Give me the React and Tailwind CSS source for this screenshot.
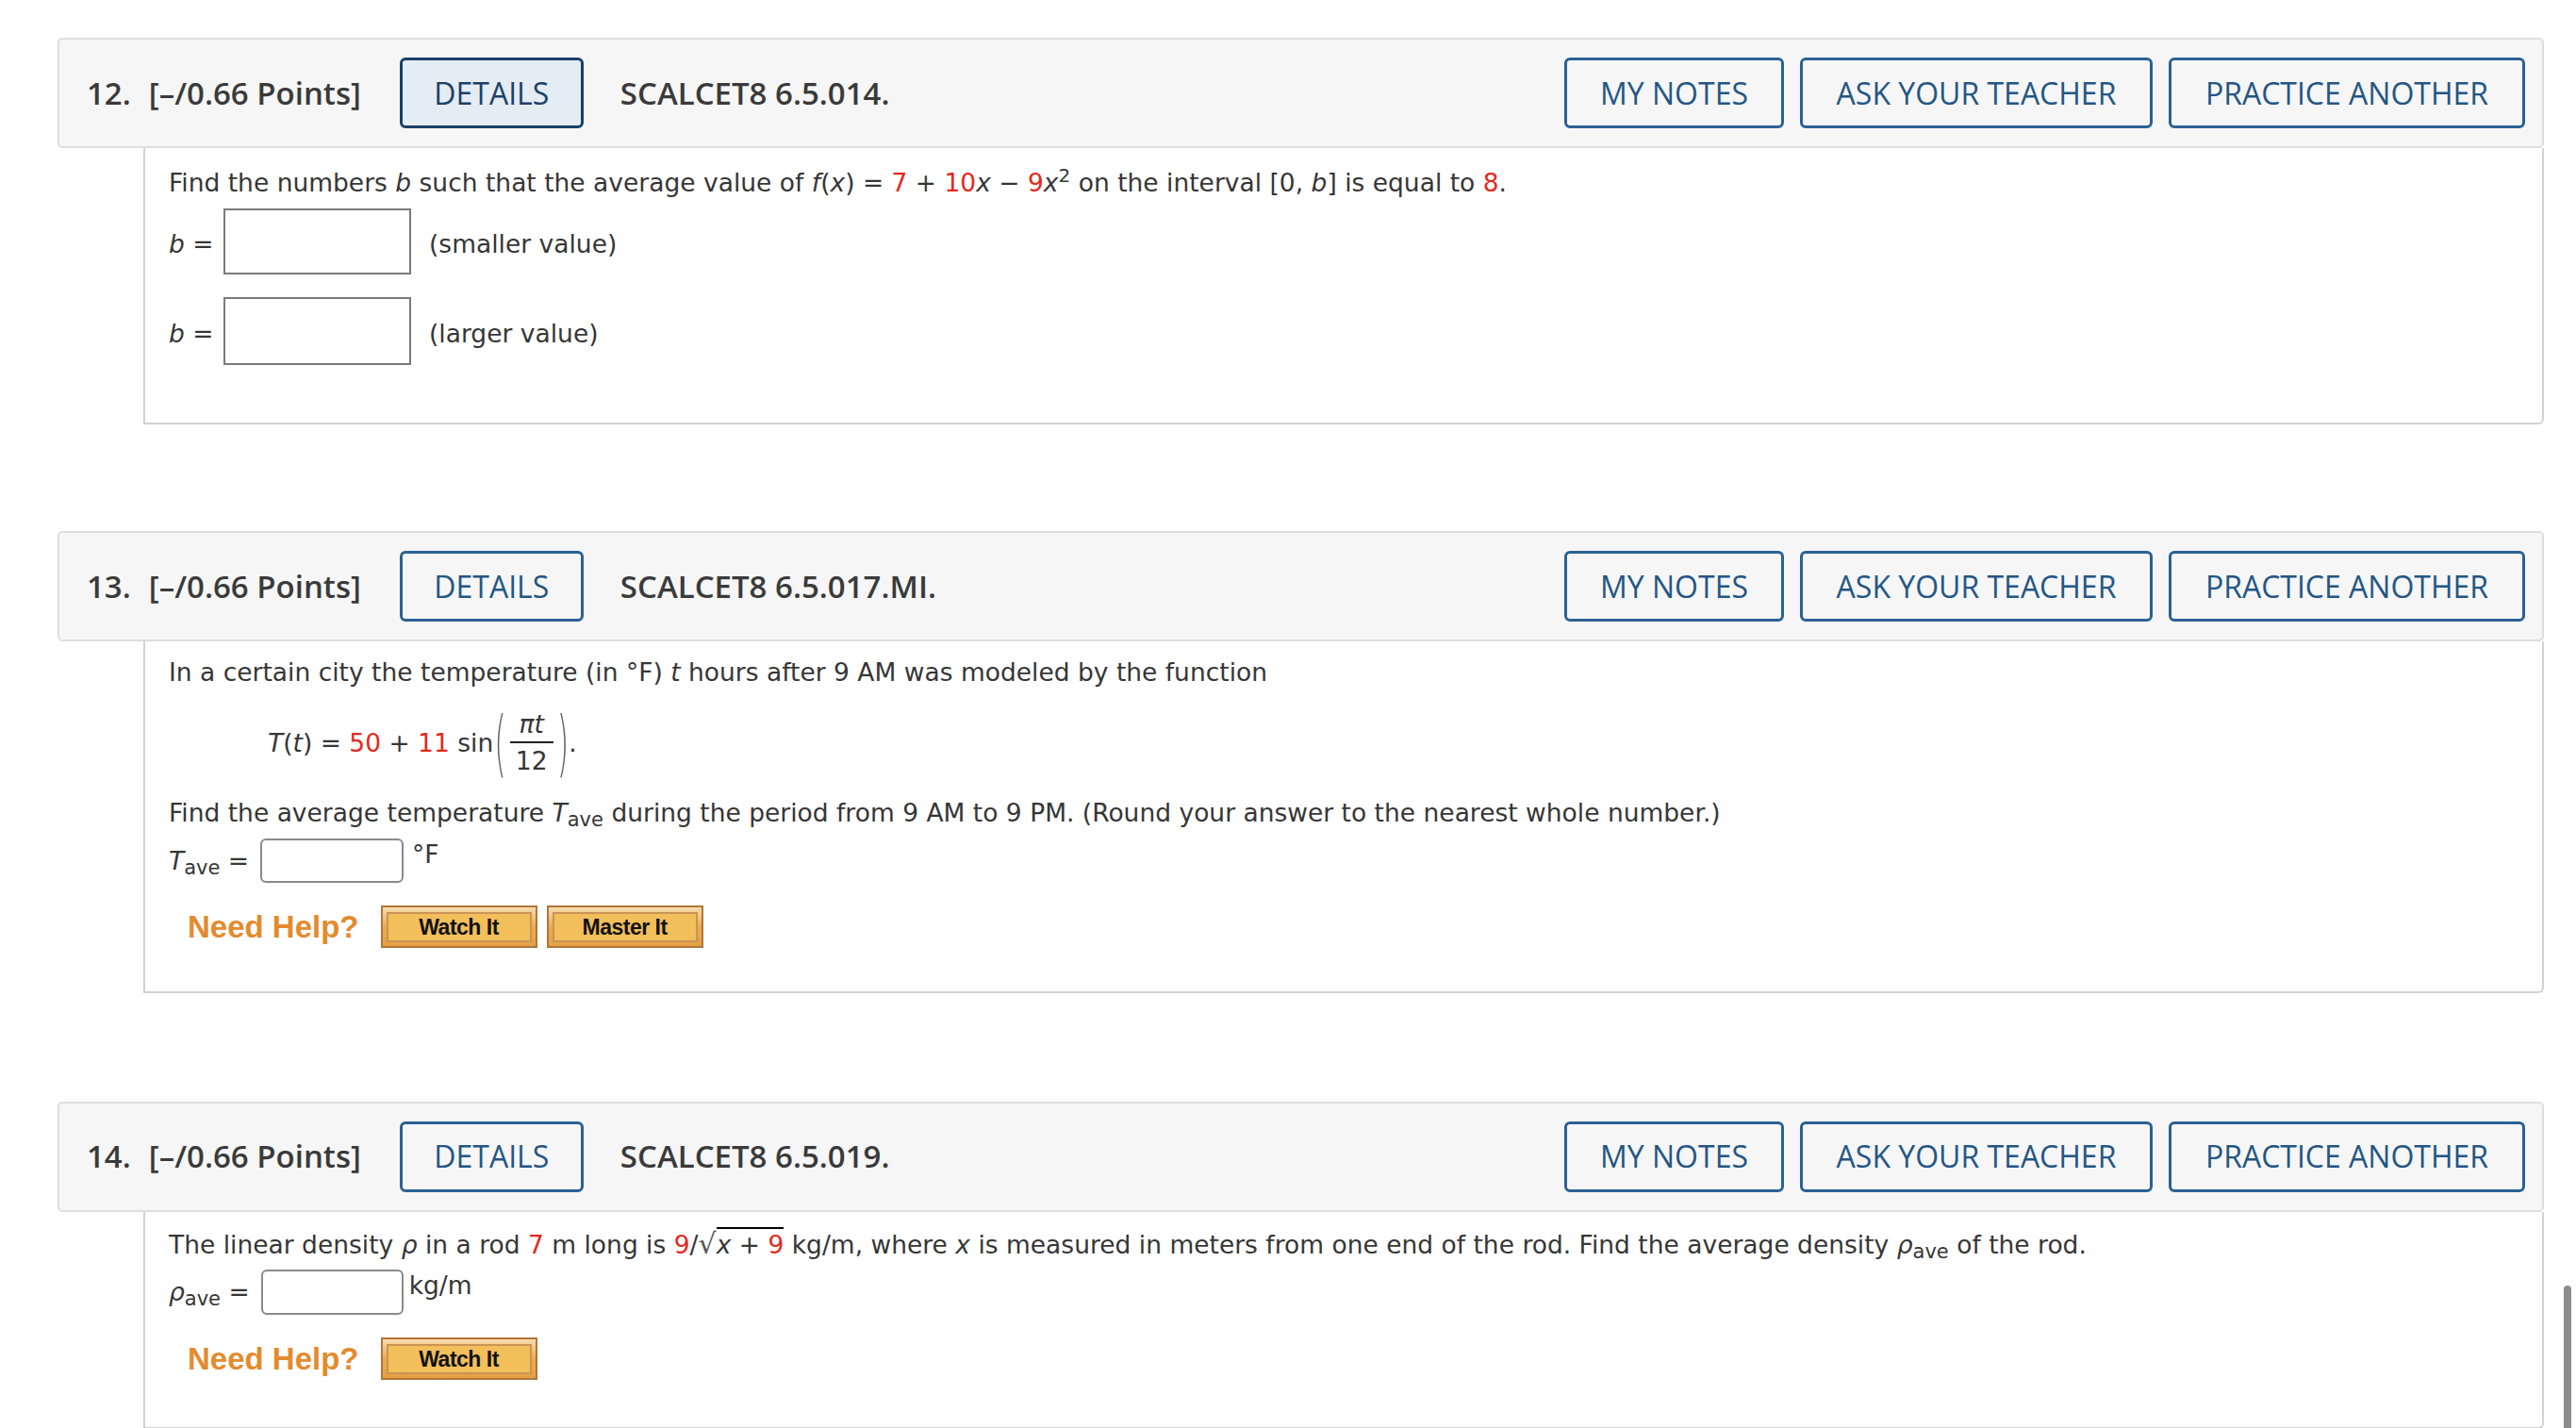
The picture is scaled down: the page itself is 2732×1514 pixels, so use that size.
import React from "react";

const Red = ({ children }) => <span className="text-[#e5281d]">{children}</span>;
const I = ({ children }) => <span className="italic">{children}</span>;

const Header = ({ num, code, active }) => {
  return (
    <div className="flex h-[117px] items-center rounded-[5px] border-2 border-[#dedede] bg-[#f6f6f6] pl-[29px] pr-[18px] font-['Open_Sans',sans-serif] text-[#3a3a3a]">
      <span className="text-[33px] font-semibold">{num}.</span>
      <span className="ml-[19px] text-[33px] font-semibold">[–/0.66 Points]</span>
      <button
        className={
          active
            ? "ml-[41px] h-[75px] w-[195px] rounded-[6px] border-[3px] border-[#1a4068] bg-[#e4ecf4] text-[32px] font-medium text-[#1c4168]"
            : "ml-[41px] h-[75px] w-[195px] rounded-[6px] border-[3px] border-[#2b6194] bg-transparent text-[32px] font-medium text-[#245685]"
        }
      >
        DETAILS
      </button>
      <span className="ml-[39px] text-[33px] font-semibold">{code}</span>
      <div className="ml-auto flex gap-[17px]">
        <button className="h-[75px] w-[233px] rounded-[6px] border-[3px] border-[#2b6194] text-[32px] font-medium text-[#245685]">
          MY NOTES
        </button>
        <button className="h-[75px] w-[374px] rounded-[6px] border-[3px] border-[#2b6194] text-[32px] font-medium text-[#245685]">
          ASK YOUR TEACHER
        </button>
        <button className="h-[75px] w-[378px] rounded-[6px] border-[3px] border-[#2b6194] text-[32px] font-medium text-[#245685]">
          PRACTICE ANOTHER
        </button>
      </div>
    </div>
  );
};

const HelpButton = ({ label }) => (
  <button className="h-[45px] w-[166px] border-2 border-[#b0773a] bg-gradient-to-b from-[#f6dcae] via-[#eeab4c] to-[#e6a041] px-[4px] pt-[5px] pb-[4px]">
    <span className="flex h-full items-center justify-center border-2 border-[#c99456] bg-[#f3bf5b] font-['Liberation_Sans',Arial,sans-serif] text-[23px] font-bold tracking-[-0.5px] text-[#111]">
      {label}
    </span>
  </button>
);

const NeedHelp = ({ buttons }) => (
  <div className="flex items-center pl-[20px]">
    <span className="font-['Liberation_Sans',Arial,sans-serif] text-[33px] font-bold text-[#e38b2e]">
      Need Help?
    </span>
    <div className="ml-[23px] flex gap-[10px]">
      {buttons.map((b) => (
        <HelpButton key={b} label={b} />
      ))}
    </div>
  </div>
);

const Body = ({ children, className }) => (
  <div
    className={`ml-[91px] rounded-br-[6px] border-x-2 border-b-2 border-[#d2d2d2] bg-white pl-[25px] font-['DejaVu_Sans',Verdana,sans-serif] text-[26.5px] text-[#363636] ${className}`}
  >
    {children}
  </div>
);

export default function App() {
  return (
    <div className="relative min-h-screen bg-white pt-[40px] pl-[61px] pr-[34px]">
      {/* 12 */}
      <Header num="12" code="SCALCET8 6.5.014." active />
      <Body className="pt-[17px] pb-[61px]">
        <div className="flex h-[40px] items-center">
          <span>
            Find the numbers <I>b</I> such that the average value of <I>f</I>(<I>x</I>) ={" "}
            <Red>7</Red> + <Red>10</Red>
            <I>x</I> − <Red>9</Red>
            <I>x</I>
            <sup className="text-[20px]">2</sup> on the interval [0, <I>b</I>] is equal to{" "}
            <Red>8</Red>.
          </span>
        </div>
        <div className="mt-[7px] flex items-center">
          <span className="mt-[5px] w-[58px]">
            <I>b</I> =
          </span>
          <div className="h-[70px] w-[199px] border-2 border-[#7a7a7a] bg-white" />
          <span className="ml-[19px] mt-[5px]">(smaller value)</span>
        </div>
        <div className="mt-[24px] flex items-center">
          <span className="mt-[5px] w-[58px]">
            <I>b</I> =
          </span>
          <div className="h-[72px] w-[199px] border-2 border-[#7a7a7a] bg-white" />
          <span className="ml-[19px] mt-[5px]">(larger value)</span>
        </div>
      </Body>

      {/* 13 */}
      <div className="mt-[113px]">
        <Header num="13" code="SCALCET8 6.5.017.MI." />
      </div>
      <Body className="pt-[13px] pb-[43px]">
        <div className="flex h-[40px] items-center">
          <span>
            In a certain city the temperature (in °F) <I>t</I> hours after 9 AM was modeled by the
            function
          </span>
        </div>
        <div className="mt-[16px] flex h-[78px] items-center pl-[105px]">
          <span>
            <I>T</I>(<I>t</I>) = <Red>50</Red> + <Red>11</Red> sin
          </span>
          <span className="ml-[1px] inline-block scale-y-[2.4] text-[32px] font-extralight text-[#666]">(</span>
          <span className="mx-[4px] inline-flex flex-col items-center">
            <span className="px-[2px] leading-[36px] italic">πt</span>
            <span className="h-[2px] w-[46px] bg-[#222]" />
            <span className="leading-[38px]">12</span>
          </span>
          <span className="inline-block scale-y-[2.4] text-[32px] font-extralight text-[#666]">)</span>
          <span>.</span>
        </div>
        <div className="mt-[15px] flex h-[40px] items-center">
          <span>
            Find the average temperature <I>T</I>
            <sub className="text-[21px]">ave</sub> during the period from 9 AM to 9 PM. (Round your
            answer to the nearest whole number.)
          </span>
        </div>
        <div className="mt-[7px] flex items-center">
          <span>
            <I>T</I>
            <sub className="text-[21px]">ave</sub> =
          </span>
          <div className="ml-[12px] h-[47px] w-[152px] rounded-[6px] border-2 border-[#8a8a8a] bg-white" />
          <span className="ml-[9px] -mt-[14px]">°F</span>
        </div>
        <div className="mt-[22px]">
          <NeedHelp buttons={["Watch It", "Master It"]} />
        </div>
      </Body>

      {/* 14 */}
      <div className="mt-[115px]">
        <Header num="14" code="SCALCET8 6.5.019." />
      </div>
      <Body className="pt-[14px] pb-[48px]">
        <div className="flex h-[40px] items-center">
          <span>
            The linear density <I>ρ</I> in a rod <Red>7</Red> m long is <Red>9</Red>/
            <span className="text-[30px] text-[#555]">√</span>
            <span className="border-t-2 border-black pt-[1px]">
              <I>x</I> + <Red>9</Red>
            </span>{" "}
            kg/m, where <I>x</I> is measured in meters from one end of the rod. Find the average
            density <I>ρ</I>
            <sub className="text-[21px]">ave</sub> of the rod.
          </span>
        </div>
        <div className="mt-[7px] flex items-center">
          <span>
            <I>ρ</I>
            <sub className="text-[21px]">ave</sub> =
          </span>
          <div className="ml-[12px] h-[48px] w-[151px] rounded-[6px] border-2 border-[#8a8a8a] bg-white" />
          <span className="ml-[6px] -mt-[14px]">kg/m</span>
        </div>
        <div className="mt-[22px]">
          <NeedHelp buttons={["Watch It"]} />
        </div>
      </Body>

      <div className="fixed bottom-0 right-[5px] h-[151px] w-[8px] rounded-t-full bg-[#8c8c8c]" />
    </div>
  );
}
